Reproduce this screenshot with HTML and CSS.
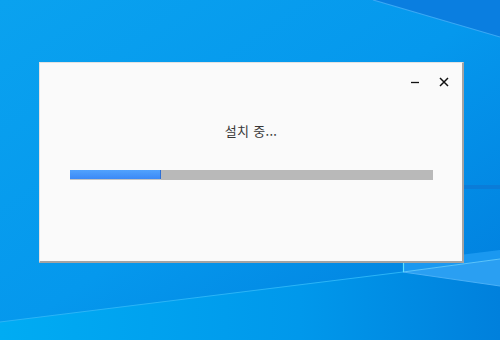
FILE: index.html
```html
<!DOCTYPE html>
<html lang="ko">
<head>
<meta charset="utf-8">
<title>설치 중</title>
<link rel="stylesheet" href="styles.css">
</head>
<body>
<div class="desktop">
  <svg class="wallpaper" width="500" height="340" viewBox="0 0 500 340" xmlns="http://www.w3.org/2000/svg">
    <defs>
      <linearGradient id="bg" x1="0" y1="0" x2="1" y2="1">
        <stop offset="0" stop-color="#0aa2ef"/>
        <stop offset="0.5" stop-color="#0598ed"/>
        <stop offset="1" stop-color="#007cdc"/>
      </linearGradient>
      <linearGradient id="low" x1="0" y1="0" x2="1" y2="0">
        <stop offset="0" stop-color="#00acf3"/>
        <stop offset="0.6" stop-color="#0098eb"/>
        <stop offset="1" stop-color="#0080dc"/>
      </linearGradient>
    </defs>
    <rect width="500" height="340" fill="url(#bg)"/>
    <polygon points="0,322 403,272 500,286 500,340 0,340" fill="url(#low)"/>
    <polygon points="373,0 500,0 500,37" fill="#0a7ee0"/>
    <line x1="373" y1="0" x2="500" y2="37" stroke="#3aa8f4" stroke-width="1.2"/>
    <line x1="0" y1="322" x2="403" y2="272" stroke="#2bb4f6" stroke-width="1"/>
    <polygon points="403,262 500,250 500,259 403,272" fill="#1a98f0"/>
    <polygon points="403,272 500,259 500,286" fill="#2a9ff2"/>
    <line x1="403" y1="272" x2="500" y2="259" stroke="#5cc4fa" stroke-width="1"/>
    <line x1="403" y1="272" x2="500" y2="286" stroke="#4ab0f6" stroke-width="1"/>
    <line x1="403.5" y1="262" x2="403.5" y2="272" stroke="#5ee0ff" stroke-width="1.2"/>
    <rect x="463" y="185" width="37" height="4" fill="#0a7cd8"/>
  </svg>

  <div class="window">
    <div class="titlebar">
      <button class="ctl" aria-label="최소화">
        <svg width="10" height="10" viewBox="0 0 10 10"><line x1="1" y1="5.5" x2="9" y2="5.5" stroke="#111" stroke-width="1.3"/></svg>
      </button>
      <button class="ctl" aria-label="닫기">
        <svg width="10" height="10" viewBox="0 0 10 10"><path d="M1 1 L9 9 M9 1 L1 9" stroke="#111" stroke-width="1.5" fill="none"/></svg>
      </button>
    </div>
    <div class="content">
      <p class="label">설치 중...</p>
      <div class="track"><div class="fill" style="width:25.2%"></div></div>
    </div>
  </div>
</div>
</body>
</html>
```

FILE: styles.css
```css
html, body {
  margin: 0;
  padding: 0;
}
body {
  width: 500px;
  height: 340px;
  overflow: hidden;
  font-family: "Noto Sans CJK KR", "Noto Sans", sans-serif;
}
.desktop {
  position: relative;
  width: 500px;
  height: 340px;
}
.wallpaper {
  position: absolute;
  left: 0;
  top: 0;
  display: block;
}
.window {
  position: absolute;
  left: 39px;
  top: 62px;
  width: 422px;
  height: 198px;
  background: #fafafa;
  border-top: 1px solid #e2e2e2;
  border-left: 1px solid #e2e2e2;
  border-right: 2px solid #a3a3a3;
  border-bottom: 2px solid #a3a3a3;
  display: flex;
  flex-direction: column;
}
.titlebar {
  height: 37px;
  display: flex;
  justify-content: flex-end;
  align-items: center;
  padding-right: 4px;
}
.ctl {
  width: 29px;
  height: 29px;
  border: 0;
  padding: 0;
  background: transparent;
  display: flex;
  align-items: center;
  justify-content: center;
}
.content {
  display: flex;
  flex-direction: column;
  align-items: center;
}
.label {
  margin: 22px 0 0;
  font-size: 13px;
  line-height: 18px;
  color: #383838;
  letter-spacing: 0.3px;
}
.track {
  margin-top: 30px;
  width: 363px;
  height: 10px;
  background: #b9b9b9;
  display: flex;
}
.fill {
  height: 9px;
  background: linear-gradient(#52a2fd, #3b89f6);
  border-right: 1px solid #2d6fd6;
  box-shadow: 0 1px 0 #c4c4c4;
  box-sizing: border-box;
}
```
